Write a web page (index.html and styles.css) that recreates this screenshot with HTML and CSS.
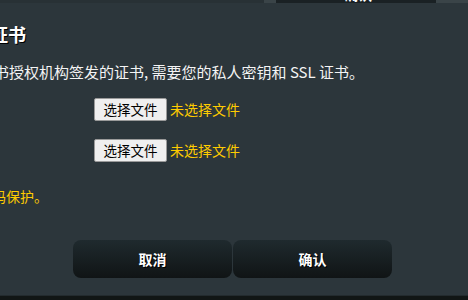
FILE: index.html
```html
<!DOCTYPE html>
<html lang="zh-CN">
<head>
<meta charset="utf-8">
<link rel="stylesheet" href="styles.css">
</head>
<body>
<div class="page">
  <div class="topstrip">
    <div class="ts-left"></div>
    <div class="ts-seg"></div>
    <div class="ts-bar"><span class="ts-text">确认</span></div>
    <div class="ts-seg ts-rest"></div>
  </div>
  <div class="dialog">
    <div class="title">证书</div>
    <div class="desc">书授权机构签发的证书, 需要您的私人密钥和 SSL 证书。</div>
    <div class="filerow first">
      <button class="filebtn" type="button">选择文件</button>
      <span class="nofile">未选择文件</span>
    </div>
    <div class="filerow">
      <button class="filebtn" type="button">选择文件</button>
      <span class="nofile">未选择文件</span>
    </div>
    <div class="note">码保护。</div>
    <div class="actions">
      <button class="act" type="button">取消</button>
      <button class="act" type="button">确认</button>
    </div>
  </div>
  <div class="bottomstrip"></div>
</div>
</body>
</html>
```

FILE: styles.css
```css
html, body {
  margin: 0;
  padding: 0;
}
body {
  width: 468px;
  height: 300px;
  overflow: hidden;
  background: #2c363b;
  font-family: "Noto Sans CJK SC", "Noto Sans", sans-serif;
}
.page {
  display: flex;
  flex-direction: column;
  width: 468px;
  height: 300px;
  overflow: hidden;
}
.topstrip {
  display: flex;
  height: 3px;
  flex: 0 0 3px;
  overflow: hidden;
  background: #283135;
}
.ts-left {
  width: 264px;
  flex: 0 0 264px;
}
.ts-seg {
  width: 12px;
  flex: 0 0 12px;
  background: #3a4448;
}
.ts-rest {
  flex: 1 1 auto;
}
.ts-bar {
  width: 160px;
  flex: 0 0 160px;
  background: #1a2124;
  text-align: center;
  overflow: hidden;
}
.ts-text {
  display: block;
  margin-top: -15px;
  padding-left: 4px;
  line-height: 18px;
  font-size: 14px;
  font-weight: bold;
  color: #fff;
}
.dialog {
  flex: 1 1 auto;
  padding-top: 19px;
  overflow: hidden;
}
.title {
  margin-left: -10px;
  font-size: 18px;
  line-height: 24px;
  font-weight: bold;
  color: #fff;
  text-shadow: 1px 1px 0 #000;
  white-space: nowrap;
}
.desc {
  margin-top: 16px;
  margin-left: -6px;
  font-size: 15px;
  line-height: 20px;
  color: #f4f4f4;
  white-space: nowrap;
}
.filerow {
  display: flex;
  align-items: center;
  height: 23px;
  padding-left: 94px;
  margin-top: 18px;
}
.filerow.first {
  margin-top: 16px;
}
.filebtn {
  box-sizing: border-box;
  width: 73px;
  height: 23px;
  padding: 0;
  margin: 0 3px 0 0;
  border: 1px solid #9a9a9a;
  border-radius: 2px;
  background: #efefef;
  color: #000;
  font-family: "Noto Sans CJK SC", sans-serif;
  font-size: 13.5px;
  line-height: 21px;
}
.nofile {
  font-size: 14px;
  line-height: 23px;
  color: #ffcc00;
}
.note {
  margin-top: 24px;
  margin-left: -8px;
  font-size: 14px;
  line-height: 20px;
  color: #ffcc00;
  white-space: nowrap;
}
.actions {
  display: flex;
  gap: 1px;
  margin-top: 34px;
  padding-left: 73px;
}
.act {
  box-sizing: border-box;
  width: 159px;
  height: 38px;
  padding: 0;
  border: 0;
  border-radius: 8px;
  background: linear-gradient(to bottom, #1f2a2e 0%, #101415 100%);
  color: #fff;
  font-family: "Noto Sans CJK SC", sans-serif;
  font-size: 14px;
  font-weight: bold;
  text-shadow: 1px 1px 0 #000;
}
.bottomstrip {
  flex: 0 0 4px;
  height: 3px;
  border-top: 1px solid #232b2e;
  background: #111615;
}
```
